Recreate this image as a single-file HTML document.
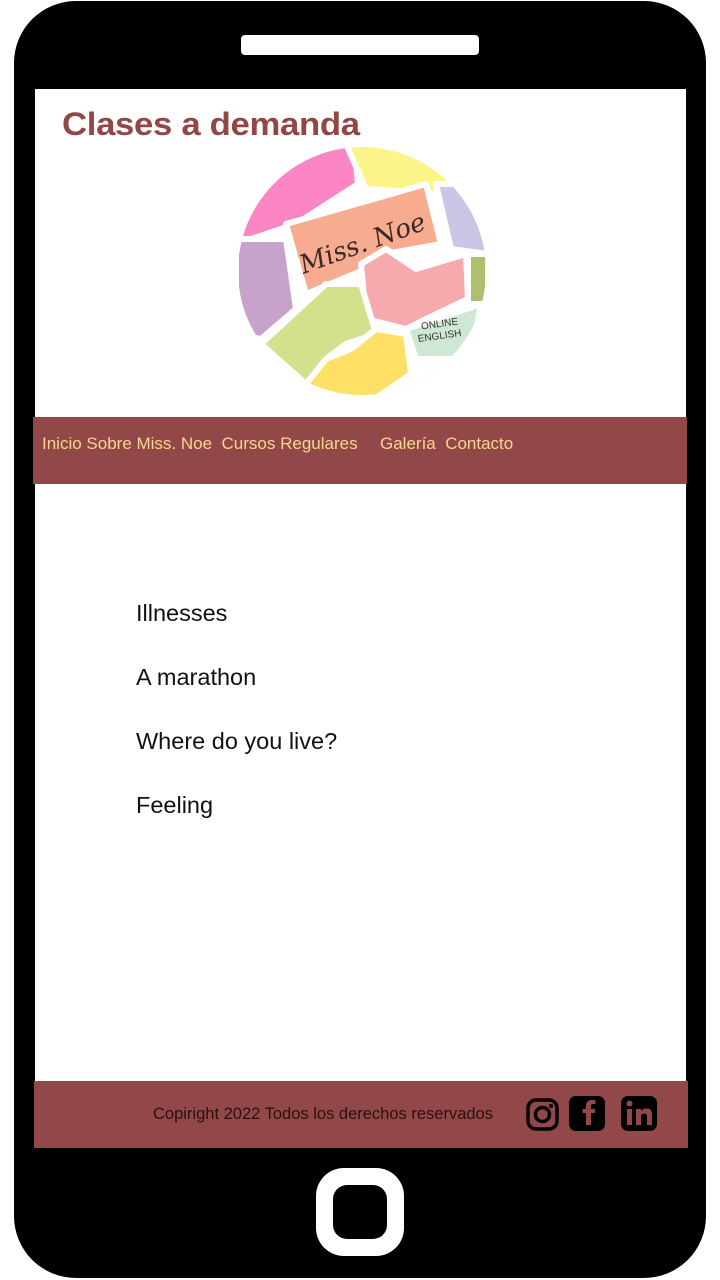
<!DOCTYPE html>
<html><head><meta charset="utf-8"><style>
*{margin:0;padding:0;box-sizing:border-box}
body{width:720px;height:1280px;background:#fff;position:relative;overflow:hidden;font-family:"Liberation Sans","DejaVu Sans",sans-serif}
.phone{position:absolute;left:14px;top:1px;width:692px;height:1277px;background:#000;border-radius:62px}
.spk{position:absolute;left:241px;top:35px;width:238px;height:20px;background:#fff;border-radius:4px}
.screen{position:absolute;left:35px;top:89px;width:651px;height:1059px;background:#fff}
.title{position:absolute;left:62px;top:106px;font-size:32px;font-weight:bold;color:#924646;letter-spacing:-0.3px;transform:scaleX(1.085);transform-origin:left}
.nav{position:absolute;left:33px;top:417px;width:654px;height:67px;background:#924848}
.nav span{position:absolute;top:17px;font-size:17px;color:#f6d98c;white-space:pre}
.item{position:absolute;left:136px;font-size:23.5px;color:#111}
.foot{position:absolute;left:34px;top:1081px;width:654px;height:67px;background:#924848}
.copy{position:absolute;left:153px;top:1105px;font-size:16.5px;color:#2a1010}
.home{position:absolute;left:316px;top:1168px;width:88px;height:88px;background:#fff;border-radius:28px}
.home div{position:absolute;left:17px;top:17px;width:54px;height:54px;background:#000;border-radius:14px}
</style></head><body>
<div class="phone"></div>
<div class="spk"></div>
<div class="screen"></div>
<div class="title">Clases a demanda</div>
<svg style="position:absolute;left:236px;top:144px" width="252" height="254" viewBox="0 0 252 254">
<defs><clipPath id="c"><circle cx="126" cy="127" r="124"/></clipPath></defs>
<g clip-path="url(#c)" stroke="#fff" stroke-width="6" stroke-linejoin="round">
<rect x="0" y="0" width="252" height="254" fill="#fff"/>
<path d="M0 0 H118 L122 40 L60 80 L0 100Z" fill="#fc85c4"/>
<path d="M110 0 H252 L200 50 L130 45Z" fill="#fbf589"/>
<path d="M200 40 L252 40 V110 L215 105Z" fill="#c9c7e5"/>
<path d="M50 80 L190 40 L205 100 L150 110 L130 125 L70 150Z" fill="#f7ab8f"/>
<path d="M0 95 L50 95 L60 165 L25 195 L0 190Z" fill="#c7a3cc"/>
<path d="M125 120 L150 105 L180 125 L230 110 L232 155 L190 175 L170 185 L130 175Z" fill="#f6aaad"/>
<path d="M232 110 H252 V160 L232 160Z" fill="#aebf6f"/>
<path d="M25 200 L90 140 L125 140 L140 190 L110 200 L90 215 L70 240Z" fill="#d3e18c"/>
<path d="M70 240 L90 215 L115 205 L140 185 L170 190 L175 230 L140 254 L70 254Z" fill="#fde065"/>
<path d="M170 185 L245 160 L235 215 L180 215Z" fill="#cfe8d5"/>
<path d="M150 254 L210 220 L252 215 V254Z" fill="#f9a95a"/>
</g>
<text x="126" y="108" font-family="DejaVu Serif,serif" font-style="italic" font-size="26" fill="#3a2a2a" text-anchor="middle" transform="rotate(-20 126 98)">Miss. Noe</text>
<text x="204" y="183" font-size="10" fill="#333" text-anchor="middle" transform="rotate(-8 204 183)">ONLINE</text>
<text x="204" y="195" font-size="10" fill="#333" text-anchor="middle" transform="rotate(-8 204 195)">ENGLISH</text>
</svg>
<div class="nav">
<span style="left:9px">Inicio Sobre Miss. Noe  Cursos Regulares</span>
<span style="left:347px">Galería  Contacto</span>
</div>
<div class="item" style="top:600px">Illnesses</div>
<div class="item" style="top:664px">A marathon</div>
<div class="item" style="top:728px">Where do you live?</div>
<div class="item" style="top:792px">Feeling</div>
<div class="foot"></div>
<div class="copy">Copiright 2022 Todos los derechos reservados</div>
<svg style="position:absolute;left:525px;top:1095px" width="135" height="38" viewBox="0 0 135 38">
<rect x="3" y="5" width="29" height="29" rx="8" fill="none" stroke="#000" stroke-width="3.5"/>
<circle cx="17.5" cy="19.5" r="7" fill="none" stroke="#000" stroke-width="3.5"/>
<circle cx="26" cy="11" r="2" fill="#000"/>
<rect x="44" y="1" width="36" height="35" rx="7" fill="#000"/>
<path d="M66 30 V18 H70 V14 H66 V11 Q66 9 68 9 H70.5 V5 H67 Q61 5 61 11 V14 H57.5 V18 H61 V30Z" fill="#924848"/>
<rect x="96" y="1" width="36" height="35" rx="7" fill="#000"/>
<rect x="102" y="14" width="5" height="16" fill="#924848"/>
<circle cx="104.5" cy="8.5" r="3" fill="#924848"/>
<path d="M111 14 H116 V16 Q118 13.5 122 13.5 Q127 13.5 127 20 V30 H122 V21 Q122 18.5 119.5 18.5 Q116 18.5 116 21.5 V30 H111Z" fill="#924848"/>
</svg>
<div class="home"><div></div></div>
</body></html>
